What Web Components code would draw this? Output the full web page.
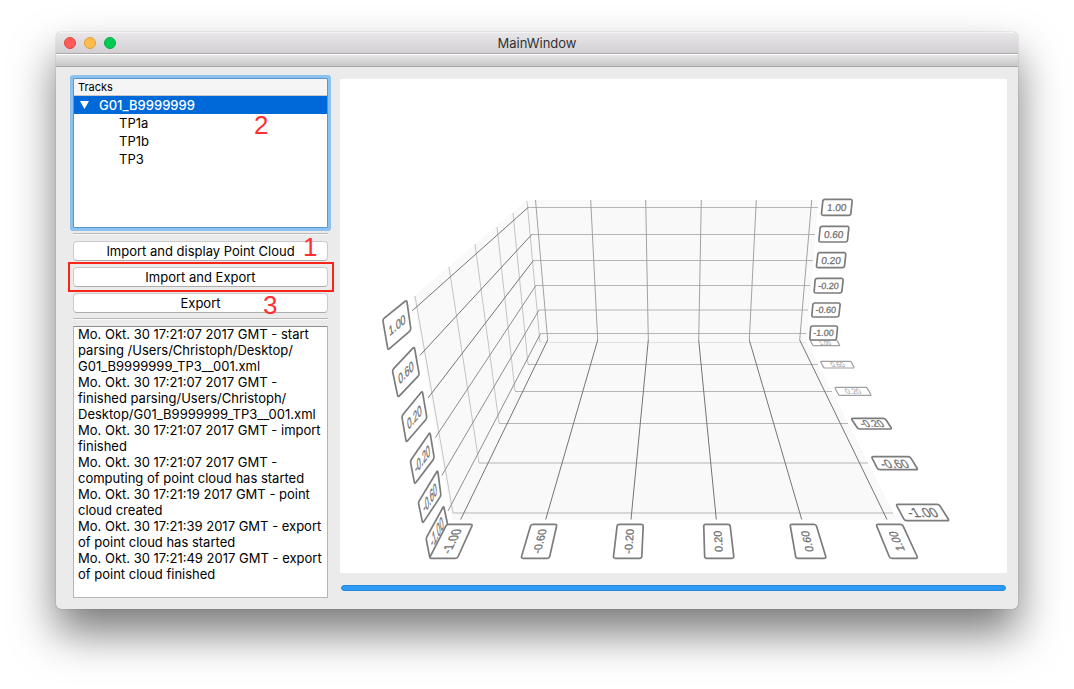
<!DOCTYPE html>
<html lang="en">
<head>
<meta charset="utf-8">
<title>MainWindow</title>
<style>
  html, body { margin: 0; background: #fff; }
  body { font: 13px/16px Inter, "Liberation Sans", sans-serif; color: #000; }
</style>
</head>
<body>
<main-window heading="MainWindow">
  <track-tree slot="side"></track-tree>
  <side-rule slot="side"></side-rule>
  <action-list slot="side"></action-list>
  <side-rule slot="side"></side-rule>
  <log-view slot="side"></log-view>
  <plot-view slot="main"></plot-view>
  <progress-line slot="main"></progress-line>
</main-window>

<script>
function define(name, html, init) {
  const template = document.createElement('template');
  template.innerHTML = html;
  customElements.define(name, class extends HTMLElement {
    constructor() {
      super();
      this.attachShadow({ mode: 'open' }).append(template.content.cloneNode(true));
    }
    connectedCallback() { if (init) init(this, this.shadowRoot); }
  });
}

define('main-window', `
<style>
  :host { display: flex; flex-direction: column; box-sizing: border-box; min-height: 100vh; padding: 32px 56px 80px; }
  .window { flex: 1; display: flex; flex-direction: column; background: #ebebeb; border-radius: 5px;
    box-shadow: 0 0 1px rgba(0,0,0,.55), 0 24px 44px rgba(0,0,0,.52); }
  header { box-sizing: border-box; height: 22px; display: grid; grid-template-columns: 1fr auto 1fr; align-items: center;
    padding: 0 8px; border-radius: 5px 5px 0 0; border-top: 1px solid #f4f4f4; border-bottom: 1px solid #aaa;
    background: linear-gradient(#e8e6e8, #d2d0d2); }
  h1 { margin: 0; font-size: 13px; line-height: 20px; font-weight: 400; color: #333; }
  .lights { display: flex; gap: 8px; }
  .lights button { width: 12px; height: 12px; padding: 0; border: 1px solid; border-radius: 50%; }
  .close { background: #ff5b57; border-color: #e2443f !important; }
  .min { background: #ffbc4b; border-color: #dfa03a !important; }
  .max { background: #00cb52; border-color: #08ac45 !important; }
  .toolbar { height: 11px; border-top: 1px solid #fff; border-bottom: 1px solid #a5a5a5; background: linear-gradient(#e4e4e4, #c9c9c9); }
  .body { flex: 1; display: grid; grid-template-columns: 255px minmax(0, 1fr); gap: 12px; padding: 11px 11px 11px 17px; }
  .side, .main { display: flex; flex-direction: column; min-width: 0; }
  .main { padding-top: 1px; }
</style>
<section class="window">
  <header>
    <div class="lights">
      <button class="close" aria-label="Close"></button>
      <button class="min" aria-label="Minimize"></button>
      <button class="max" aria-label="Zoom"></button>
    </div>
    <h1></h1>
  </header>
  <div class="toolbar"></div>
  <div class="body">
    <div class="side"><slot name="side"></slot></div>
    <div class="main"><slot name="main"></slot></div>
  </div>
</section>`, (el, root) => { root.querySelector('h1').textContent = el.getAttribute('heading'); });

define('callout-mark', `
<style>
  :host { display: block; position: absolute; font: 26px/26px "Liberation Sans", sans-serif; color: #ff3030; pointer-events: none; }
</style><slot></slot>`);

define('track-tree', `
<style>
  :host { display: block; position: relative; box-sizing: border-box; height: 150px; background: #fff;
    border: 1px solid #5796cf; box-shadow: 0 0 0 3px #8dc1ee; border-radius: 1px; }
  .head { height: 16px; padding-left: 4px; font-size: 11px; line-height: 16px; background: #f5f5f5; border-bottom: 1px solid #c8c8c8; }
  ul { list-style: none; margin: 0; padding: 0; line-height: 18px; }
  .row { display: flex; align-items: center; gap: 10px; padding-left: 6px; height: 18px; background: #0069d9; color: #fff; font-weight: 500; }
  ul ul { padding-left: 45px; }
  svg { display: block; }
  callout-mark { left: 180px; top: 33px; }
</style>
<div class="head" id="h">Tracks</div>
<ul role="tree" aria-labelledby="h">
  <li role="treeitem" aria-expanded="true" aria-selected="true">
    <div class="row"><svg width="9" height="8" aria-hidden="true"><path d="M0 0h9L4.500 8z" fill="#fff"/></svg><span>G01_B9999999</span></div>
    <ul role="group">
      <li role="treeitem">TP1a</li>
      <li role="treeitem">TP1b</li>
      <li role="treeitem">TP3</li>
    </ul>
  </li>
</ul>
<callout-mark>2</callout-mark>`);

define('side-rule', `
<style>:host { display: block; height: 1px; margin: 5px 0 6px; background: #b8b8b8; border-bottom: 1px solid #f8f8f8; }</style>`);

define('action-list', `
<style>
  :host { display: flex; flex-direction: column; gap: 6px; position: relative; }
  button { box-sizing: border-box; height: 20px; padding: 0; font: inherit; line-height: 18px; color: #000; background: #fff;
    border: 1px solid #cbcbcb; border-bottom-color: #adadad; border-radius: 4px; }
  .frame { position: absolute; inset: 21px -6px 21px -5px; border: 2px solid #fb2418; pointer-events: none; }
  .one { left: 230px; top: -7px; }
  .three { left: 190px; top: 51px; }
</style>
<button>Import and display Point Cloud</button>
<button>Import and Export</button>
<button>Export</button>
<div class="frame"></div>
<callout-mark class="one">1</callout-mark>
<callout-mark class="three">3</callout-mark>`);

define('log-view', `
<style>
  :host { flex: 1; display: flex; }
  textarea { flex: 1; box-sizing: border-box; width: 100%; margin: 0; padding: 0 0 0 4px; border: 1px solid #b5b5b5; border-top: 0;
    box-shadow: inset 0 1px #8c8c8c; border-radius: 0; background: #fff; color: #000; font: inherit; line-height: 16px;
    resize: none; overflow: hidden; white-space: pre; outline: 0; }
</style>
<textarea readonly aria-label="Log">Mo. Okt. 30 17:21:07 2017 GMT - start
parsing /Users/Christoph/Desktop/
G01_B9999999_TP3__001.xml
Mo. Okt. 30 17:21:07 2017 GMT -
finished parsing/Users/Christoph/
Desktop/G01_B9999999_TP3__001.xml
Mo. Okt. 30 17:21:07 2017 GMT - import
finished
Mo. Okt. 30 17:21:07 2017 GMT -
computing of point cloud has started
Mo. Okt. 30 17:21:19 2017 GMT - point
cloud created
Mo. Okt. 30 17:21:39 2017 GMT - export
of point cloud has started
Mo. Okt. 30 17:21:49 2017 GMT - export
of point cloud finished</textarea>`);

define('progress-line', `
<style>
  :host { display: block; padding: 12px 1px 7px; }
  progress { display: block; appearance: none; width: 100%; height: 6px; border: 0; border-radius: 3px; overflow: hidden; background: #d5d5d5; }
  progress::-webkit-progress-bar { background: #d5d5d5; }
  progress::-webkit-progress-value { box-sizing: border-box; background: #2d9af5; border: 1px solid #2588da; border-radius: 3px; }
</style>
<progress value="100" max="100" aria-label="Export progress"></progress>`);

/* Axis labels: text, font size, then the tag's corners in reading order
   (top left, top right, bottom right, bottom left of the text). */
const tags = [
  ['1.00', 11, [[382.700,319.300],[406.700,300],[411,330],[388,350]]],
  ['0.60', 11, [[392.300,370],[414.300,346.700],[419.300,375],[398,397.300]]],
  ['0.20', 11, [[401.700,416],[422.300,391],[427,418.300],[406.300,442.300]]],
  ['-0.20', 11, [[410.300,461],[430,432.300],[434.300,458.300],[414.700,484]]],
  ['-0.60', 11, [[418.300,502.300],[437.700,470.300],[441,495.700],[422.700,523.300]]],
  ['-1.00', 11, [[426,538.300],[443.700,506],[447.700,525],[430,558.300]]],
  ['1.00', 6, [[810,340],[836.700,340],[840,345.700],[813,345.700]]],
  ['1.00', 10, [[823,199.300],[852.300,199.300],[850.700,215.300],[821.300,215.300]]],
  ['0.60', 10, [[820.300,226.300],[849,226.300],[847.300,242],[818.700,242]]],
  ['0.20', 10, [[818,252.700],[846,252.700],[844.300,267.700],[816.300,267.700]]],
  ['-0.20', 9, [[815.300,278.300],[843.300,278.300],[841.700,293],[814,293]]],
  ['-0.60', 9, [[813,303],[840.300,303],[838.700,317],[811.700,317]]],
  ['-1.00', 9, [[810.700,326],[837.700,326],[836.300,340],[809.700,340]]],
  ['0.60', 7, [[820.300,361.300],[851,361.300],[854.300,368],[824,368]]],
  ['0.20', 8, [[834.700,387.300],[866.700,387.300],[871.300,395.300],[839,395.300]]],
  ['-0.20', 10, [[851,418.300],[885,418.300],[892,429],[858,429]]],
  ['-0.60', 12, [[871.300,456.700],[910,456.700],[918,469.700],[878,469.700]]],
  ['-1.00', 13, [[896,504.300],[939,504.300],[949.300,520.700],[904.700,520.700]]],
  ['-1.00', 12, [[429.300,558.300],[446.700,524.300],[472.700,524.300],[457.300,558.300]]],
  ['-0.60', 11, [[521,558.300],[531,524.300],[557,524.300],[549.300,558.300]]],
  ['-0.20', 11, [[613.300,558.300],[617.300,524.300],[643.300,524.300],[641.700,558.300]]],
  ['0.20', 11, [[704.700,558.300],[703.700,524.300],[730,524.300],[734,558.300]]],
  ['0.60', 11, [[796,558.300],[790,524.300],[816,524.300],[826.300,558.300]]],
  ['1.00', 11, [[890,558.300],[876,524.300],[902.300,524.300],[918,558.300]]]
];

/* Grid lines: x1 y1 x2 y2 */
const grid = {
  wall: [[415,296,453,513],[449,267,479,463],[475,244,499,423],[497,227,515,391],[513,213,528,364],[527,201,540,342]],
  pale: [[540,342.500,806,342.500]],
  across: [[528,207.500,818,207.500],[532,234.500,815,234.500],[534,260.500,813,260.500],[536,285.500,810,285.500],[539,310,808,310],[541,333.500,806,333.500],
    [528,364.500,818,364.500],[515,391.500,832,391.500],[499,423.500,848,423.500],[479,463,868,463],[453,513,893,513]],
  up: [[535.500,200,547.700,340],[590.700,200,597.700,340],[645.700,200,648.300,340],[701.300,200,698.700,340],[756.300,200,749.300,340],[811.700,200,799.700,340]],
  deep: [[412.300,310.700,528.300,207.300],[420,355.300,532,234.300],[428,398,533.500,260.300],
    [547.700,340,460.700,519.500],[597.700,340,545.700,519.500],[648.300,340,631,519.500],[698.700,340,716.300,519.500],[749.300,340,801.700,519.500],[799.700,340,887,519.500]],
  soft: [[435.300,437.700,536,285.300],[441.700,475.700,539,310],[448,511,540.700,333.300]]
};

function roundedPath(points, radius) {
  let d = '';
  points.forEach((p, i) => {
    const toward = q => {
      const length = Math.hypot(q[0] - p[0], q[1] - p[1]);
      const t = Math.min(radius / length, .4);
      return [p[0] + (q[0] - p[0]) * t, p[1] + (q[1] - p[1]) * t];
    };
    const a = toward(points[(i + 3) % 4]), b = toward(points[(i + 1) % 4]);
    d += (i ? 'L' : 'M') + a + 'Q' + p + ' ' + b;
  });
  return d + 'Z';
}

function tagMarkup([label, size, c]) {
  const cx = (c[0][0] + c[1][0] + c[2][0] + c[3][0]) / 4;
  const cy = (c[0][1] + c[1][1] + c[2][1] + c[3][1]) / 4;
  const angle = Math.atan2(c[1][1] - c[0][1] + c[2][1] - c[3][1], c[1][0] - c[0][0] + c[2][0] - c[3][0]);
  const dx = c[3][0] - c[0][0] + c[2][0] - c[1][0], dy = c[3][1] - c[0][1] + c[2][1] - c[1][1];
  const lx = dx * Math.cos(angle) + dy * Math.sin(angle), ly = dy * Math.cos(angle) - dx * Math.sin(angle);
  const lean = Math.atan2(lx, ly), deg = 180 / Math.PI;
  const far = size < 9 ? ' far' : '';
  return `<path class="tag${far}" d="${roundedPath(c, size < 9 ? 1 : 2)}"/>` +
    `<text class="label${far}" transform="translate(${cx} ${cy}) rotate(${angle * deg}) skewX(${lean * deg})" y="${size * .36}" font-size="${size}">${label}</text>`;
}

define('plot-view', `
<style>
  :host { flex: 1; display: flex; min-height: 0; background: #fff; }
  svg { flex: 1; width: 100%; min-width: 0; display: block; }
  .ground { fill: #f9f9f9; }
  line { stroke-width: 1; }
  .wall { stroke: #c4c4c4; } .pale { stroke: #e2e2e2; } .across { stroke: #b5b5b5; }
  .up { stroke: #a2a2a2; } .deep { stroke: #757575; } .soft { stroke: #8e8e8e; }
  .tag { fill: #fff; stroke: #7c7c7c; stroke-width: 1.700; }
  .tag.far { stroke: #a0a0a0; stroke-width: 1.200; }
  .label { font-family: "Liberation Sans", sans-serif; fill: #707070; stroke: #707070; stroke-width: .250; text-anchor: middle; }
  .label.far { fill: #999; stroke: none; }
</style>
<svg viewBox="340 79 667 494" role="img" aria-label="Empty 3D plot">
  <path class="ground" d="M527 200H818L807 342L897 520H452L413 297Z"/>
  <g id="grid"></g><g id="tags"></g>
</svg>`, (el, root) => {
  root.querySelector('#grid').innerHTML = Object.entries(grid).map(([kind, lines]) =>
    lines.map(l => `<line class="${kind}" x1="${l[0]}" y1="${l[1]}" x2="${l[2]}" y2="${l[3]}"/>`).join('')).join('');
  root.querySelector('#tags').innerHTML = tags.map(tagMarkup).join('');
});
</script>
</body>
</html>
